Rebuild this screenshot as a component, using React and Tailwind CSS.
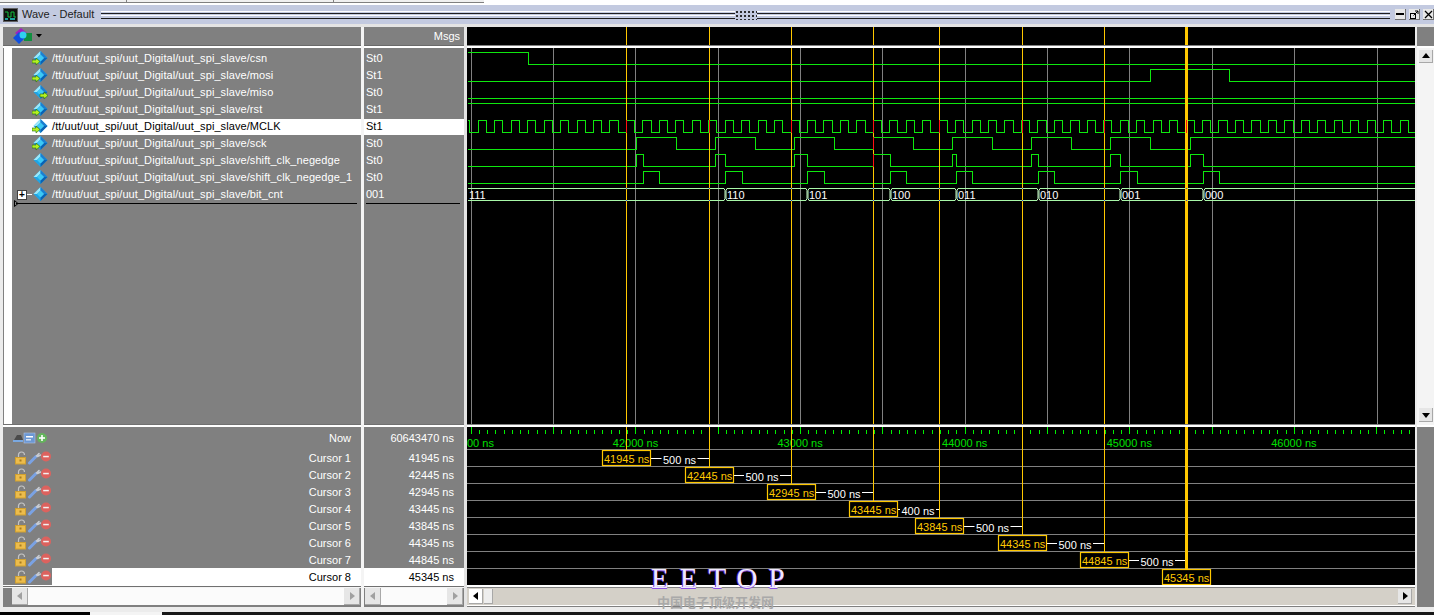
const FONT = "font-['Liberation_Sans',sans-serif]";

const SIGNALS = [
  { name: "csn", value: "St0", arrow: "left" },
  { name: "mosi", value: "St1", arrow: "left" },
  { name: "miso", value: "St0", arrow: "right" },
  { name: "rst", value: "St1", arrow: "left" },
  { name: "MCLK", value: "St1", arrow: "left", selected: true },
  { name: "sck", value: "St0", arrow: "left" },
  { name: "shift_clk_negedge", value: "St0" },
  { name: "shift_clk_negedge_1", value: "St0" },
  { name: "bit_cnt", value: "001", expand: true },
];

const CURSORS = [
  { x: 626, time: 41945, gap: "500 ns" },
  { x: 709, time: 42445, gap: "500 ns" },
  { x: 791, time: 42945, gap: "500 ns" },
  { x: 873, time: 43445, gap: "400 ns" },
  { x: 939, time: 43845, gap: "500 ns" },
  { x: 1022, time: 44345, gap: "500 ns" },
  { x: 1104, time: 44845, gap: "500 ns" },
  { x: 1186, time: 45345 },
];

const GREEN = "#0ee80e";
const YELLOW = "#ffc800";
const GRID = [471, 553, 635, 718, 800, 882, 965, 1047, 1129, 1212, 1294, 1377];
const BUS = [
  { x: 468, label: "111" },
  { x: 725, label: "110" },
  { x: 807, label: "101" },
  { x: 890, label: "100" },
  { x: 956, label: "011" },
  { x: 1038, label: "010" },
  { x: 1120, label: "001" },
  { x: 1203, label: "000" },
];

// level changes at each edge, starts at startHigh
function wave(hi, lo, edges, startHigh = false) {
  let high = startHigh;
  let d = `M468 ${(high ? hi : lo) + 0.5}`;
  edges.forEach((x) => {
    high = !high;
    d += ` H${Math.floor(x) + 0.5} V${(high ? hi : lo) + 0.5}`;
  });
  return d + " H1415";
}

function mclkEdges() {
  const edges = [];
  for (let k = -10; k < 48; k++) {
    const rise = 626.4 + k * 16.46;
    if (rise > 468) edges.push(rise);
    edges.push(rise + 8.2);
  }
  return edges.filter((x) => x > 468 && x < 1415);
}

const TRACES = [
  wave(52, 64, [528], true),
  wave(69, 81, [1150, 1229]),
  wave(98, 98, []),
  wave(103, 103, []),
  wave(120, 132, mclkEdges(), true),
  wave(137, 149, [636, 676, 715, 755, 794, 834, 873, 913, 952, 992, 1031, 1071, 1110, 1150, 1190]),
  wave(154, 166, [636, 643, 715, 725, 794, 807, 873, 890, 952, 956, 1031, 1038, 1110, 1120, 1190, 1203]),
  wave(171, 183, [643, 659, 725, 742, 807, 824, 890, 906, 956, 972, 1038, 1054, 1120, 1137, 1203, 1219]),
];

function SignalIcon({ arrow }) {
  return (
    <svg width="16" height="15" viewBox="0 0 16 15" className="shrink-0">
      <polygon points="8.5,0 15.5,7 8.5,14 1.5,7" fill="#1ea4e6" />
      <polygon points="8.5,0 1.5,7 5,7 8.5,3.5" fill="#9be8fb" />
      <polygon points="8.5,0 15.5,7 12,7 8.5,3.5" fill="#1b7fd0" />
      <polygon points="8.5,14 15.5,7 12,7 8.5,10.5" fill="#0a62b4" />
      <polygon points="8.5,3.5 12,7 8.5,10.5 5,7" fill="#3cc8f4" />
      {arrow === "left" && (
        <polygon points="0,9 4,9 4,7 8,10.5 4,14 4,12 0,12" fill="#b4f020" stroke="#1d6b12" strokeWidth="0.6" />
      )}
      {arrow === "right" && (
        <polygon points="8,9 12,9 12,7 16,10.5 12,14 12,12 8,12" fill="#b4f020" stroke="#1d6b12" strokeWidth="0.6" />
      )}
    </svg>
  );
}

function SignalRow({ signal }) {
  return (
    <div
      className={`flex h-[17px] items-center whitespace-nowrap ${
        signal.selected ? "bg-white text-black shadow-[inset_0_1px_0_#808080]" : "text-white"
      }`}
    >
      <div className="flex w-[20px] shrink-0 items-center justify-end">
        {signal.expand && (
          <>
            <div className="flex h-[10px] w-[10px] items-center justify-center border border-[#404040] bg-white text-[10px] leading-none font-bold text-black">
              +
            </div>
            <div className="h-px w-[5px] bg-white" />
          </>
        )}
      </div>
      <SignalIcon arrow={signal.arrow} />
      <span className="ml-[4px] tracking-[0.08px]">/tt/uut/uut_spi/uut_Digital/uut_spi_slave/{signal.name}</span>
    </div>
  );
}

function ScrollButton({ dir, dark, className = "" }) {
  const points = { left: "7,1 7,9 2,5", right: "3,1 3,9 8,5", up: "1,7 9,7 5,2", down: "1,3 9,3 5,8" };
  return (
    <div className={`flex shrink-0 items-center justify-center border-r border-b border-[#a8a8a8] bg-[#e6e6e6] ${className}`}>
      <svg width="10" height="10" viewBox="0 0 10 10">
        <polygon points={points[dir]} fill={dark ? "#000" : "#a0a0a0"} />
      </svg>
    </div>
  );
}

function HScroll({ pad = "" }) {
  return (
    <div className={`flex h-[17px] items-stretch bg-[#808080] ${pad}`}>
      <ScrollButton dir="left" className="w-[16px]" />
      <div className="flex-1 bg-[#fbfbfb]" />
      <ScrollButton dir="right" className="w-[16px]" />
    </div>
  );
}

function CursorIcons() {
  return (
    <svg width="38" height="14" viewBox="0 0 38 14" className="shrink-0">
      <path d="M3.5 6 V4 a3 3 0 0 1 6 0" fill="none" stroke="#c4c4c4" strokeWidth="1.2" />
      <rect x="0.5" y="6.5" width="10" height="6.5" fill="#ecbc4c" stroke="#d0a030" />
      <rect x="4.5" y="8.5" width="2" height="2" fill="#a87c20" />
      <path d="M14.5 12 L21 5.5" stroke="#7aa2e4" strokeWidth="3" strokeLinecap="round" />
      <path d="M21.5 5 L24 2.5 M22.5 5.5 L25.5 4" stroke="#c8ccd4" strokeWidth="1.6" strokeLinecap="round" />
      <circle cx="31" cy="5.5" r="5" fill="#dc625e" />
      <rect x="28.2" y="4.8" width="5.6" height="1.5" fill="#f4f0f0" />
    </svg>
  );
}

function NowIcons() {
  return (
    <svg width="35" height="13" viewBox="0 0 35 13" className="shrink-0">
      <path d="M1 8 L4 3 H8 L10 8 Z" fill="#4a4a4a" />
      <rect x="0" y="8" width="10" height="2" fill="#7aa8e0" />
      <rect x="11" y="1" width="11" height="10" fill="#6c98d4" stroke="#b0c4e4" strokeWidth="0.6" />
      <rect x="13" y="4" width="7" height="1.5" fill="#fff" />
      <rect x="13" y="7" width="5" height="1.5" fill="#d8e4f4" />
      <circle cx="29" cy="6" r="5" fill="#64b45c" />
      <rect x="26" y="5.2" width="6" height="1.6" fill="#fff" />
      <rect x="28.2" y="3" width="1.6" height="6" fill="#fff" />
    </svg>
  );
}

function CursorRow({ label, selected }) {
  return (
    <div className="flex h-[17px] items-center">
      <div className="flex w-[49px] shrink-0 pl-[12px]">
        <CursorIcons />
      </div>
      <div className={`flex h-full flex-1 items-center justify-end pt-px pr-[10px] ${selected ? "bg-white text-black" : "text-white"}`}>
        {label}
      </div>
    </div>
  );
}

function WaveHeader() {
  return (
    <svg width="948" height="18" viewBox="467 27 948 18" className="block bg-black" shapeRendering="crispEdges">
      {CURSORS.map((c, i) => (
        <rect key={c.x} x={i === 7 ? c.x - 1 : c.x} y="27" width={i === 7 ? 3 : 1} height="18" fill={YELLOW} />
      ))}
    </svg>
  );
}

function WaveCanvas() {
  return (
    <svg width="948" height="376" viewBox="467 48 948 376" className="block bg-black">
      <g shapeRendering="crispEdges">
        {GRID.map((x) => (
          <rect key={x} x={x} y="48" width="1" height="376" fill="#808080" />
        ))}
        {TRACES.map((d, i) => (
          <path key={i} d={d} fill="none" stroke={GREEN} strokeWidth="1" />
        ))}
        <path d="M468 188.5 H1415 M468 200.5 H1415" stroke="#a8f8a8" />
        {CURSORS.map((c, i) => (
          <rect key={c.x} x={i === 7 ? c.x - 1 : c.x} y="48" width={i === 7 ? 3 : 1} height="376" fill={YELLOW} />
        ))}
        {CURSORS.map((c) => (
          <g key={c.x}>
            <rect x={c.x} y="120" width="1" height="13" fill="#ff1010" />
            <rect x={c.x} y="188" width="1" height="1" fill="#3040d0" />
            <rect x={c.x} y="200" width="1" height="1" fill="#3040d0" />
          </g>
        ))}
        <rect x="873" y="137" width="1" height="13" fill="#ff1010" />
        <rect x="873" y="154" width="1" height="13" fill="#ff1010" />
      </g>
      {BUS.slice(1).map((b) => (
        <g key={b.x}>
          <rect x={b.x - 1} y="187" width="3" height="15" fill="#000" />
          <path
            d={`M${b.x - 1} 188.5 L${b.x} 190.5 V198.5 L${b.x - 1} 200.5 M${b.x + 2} 188.5 L${b.x + 1} 190.5 V198.5 L${b.x + 2} 200.5`}
            fill="none"
            stroke="#c8ffc8"
          />
        </g>
      ))}
      {BUS.map((b) => (
        <text key={b.label} x={b.x + (b.label === "111" ? 1 : 2)} y="199" fontSize="11" fill="#fff" fontFamily="Liberation Sans, sans-serif">
          {b.label}
        </text>
      ))}
    </svg>
  );
}

function CursorCanvas() {
  const ticks = [];
  for (let k = 0; k * 8.23 + 471.3 < 1415; k++) ticks.push(k);
  return (
    <svg width="948" height="158" viewBox="467 427 948 158" className="block bg-black" fontFamily="Liberation Sans, sans-serif" fontSize="11">
      <g shapeRendering="crispEdges">
        {ticks.map((k) => {
          const major = k % 10 === 0;
          return (
            <rect
              key={k}
              x={Math.floor(471.3 + k * 8.23)}
              y={major ? 427 : 430}
              width="1"
              height={major ? 7 : 4}
              fill="#00f000"
            />
          );
        })}
        {[449, 466, 483, 500, 517, 534, 551, 568].map((y) => (
          <rect key={y} x="467" y={y} width="948" height="1" fill="#808080" />
        ))}
      </g>
      <text x="467" y="447" fill="#00e000">
        00 ns
      </text>
      {[0, 1, 2, 3, 4].map((k) => (
        <text key={k} x={635.5 + k * 164.6} y="447" textAnchor="middle" fill="#00e000">
          {42000 + k * 1000} ns
        </text>
      ))}
      {CURSORS.map((c, i) => {
        const top = 450 + i * 17;
        const next = CURSORS[i + 1];
        return (
          <g key={c.x}>
            <rect x={i === 7 ? c.x - 1 : c.x} y="427" width={i === 7 ? 3 : 1} height={top - 427} fill={YELLOW} shapeRendering="crispEdges" />
            {next && (
              <>
                <rect x={c.x + 24} y={top + 8} width={next.x - c.x - 24} height="1" fill="#fff" shapeRendering="crispEdges" />
                <rect x={(c.x + 24 + next.x) / 2 - 18} y={top} width="36" height="15" fill="#000" />
                <text x={(c.x + 24 + next.x) / 2} y={top + 14} textAnchor="middle" fill="#fff">
                  {c.gap}
                </text>
              </>
            )}
            <rect x={c.x - 23.5} y={top + 0.5} width="48" height="15" fill="#000" stroke={YELLOW} strokeWidth="1.2" />
            <text x={c.x - 22} y={top + 13} fill={YELLOW}>
              {c.time} ns
            </text>
          </g>
        );
      })}
    </svg>
  );
}

function TitleIcon() {
  return (
    <svg width="15" height="14" viewBox="0 0 15 14" className="shrink-0">
      <rect x="0.5" y="0.5" width="14" height="13" fill="#101010" stroke="#606060" />
      <path d="M2 4 H5 V9 H8 V4 H11 V9 H13" fill="none" stroke="#10c040" />
      <rect x="2" y="10" width="3" height="2" fill="#20a0a0" />
      <rect x="7" y="10" width="5" height="2" fill="#20a0a0" />
    </svg>
  );
}

function TitleGrip() {
  return (
    <div className="relative flex h-[8px] flex-1 flex-col justify-between">
      <div className="h-[3px] border-t border-b border-t-white border-b-[#202020]" />
      <div className="h-[4px] border-t border-b border-t-white border-b-[#202020]" />
      <div className="absolute top-[-1px] left-[634px] h-[10px] w-[22px] bg-[#c3cae0] bg-[radial-gradient(#202020_0.7px,transparent_0.8px)] bg-[length:4px_4px]" />
    </div>
  );
}

function TitleButton({ children, className = "" }) {
  return (
    <div className={`flex h-[11px] w-[11px] items-center justify-center border-r border-b border-[#707070] bg-[#e8e8e8] ${className}`}>
      {children}
    </div>
  );
}

export default function App() {
  return (
    <div className={`relative flex h-[615px] w-[1434px] flex-col overflow-hidden bg-[#ececec] text-[11px] ${FONT}`}>
      {/* tab strip above the title */}
      <div className="h-[5px] shrink-0 bg-white">
        <div className="flex h-[3px] w-[484px] border-b border-[#808080] bg-[#f0f0f0]">
          <div className="w-[127px] border-r border-[#808080]" />
          <div className="ml-[3px] w-[204px] border-r border-[#808080]" />
        </div>
      </div>

      <div className="flex h-[19px] shrink-0 items-center bg-[#c3cae0] pl-[3px]">
        <TitleIcon />
        <span className="ml-[4px] w-[79px] whitespace-nowrap text-[#222]">Wave - Default</span>
        <TitleGrip />
        <TitleButton className="ml-[5px]">
          <div className="h-[2px] w-[8px] bg-black" />
        </TitleButton>
        <TitleButton className="ml-[3px]">
          <svg width="9" height="9" viewBox="0 0 9 9">
            <rect x="0.5" y="3.5" width="5" height="5" fill="none" stroke="#000" />
            <path d="M3.5 5.5 L8 1 M5 1 H8 V4" fill="none" stroke="#000" />
          </svg>
        </TitleButton>
        <TitleButton className="ml-[3px]">
          <svg width="9" height="9" viewBox="0 0 9 9">
            <path d="M1 1 L8 8 M8 1 L1 8" stroke="#000" strokeWidth="1.3" />
          </svg>
        </TitleButton>
      </div>
      <div className="h-[3px] shrink-0 bg-[#e4e4e4]" />

      {/* signals + wave pane */}
      <div className="flex h-[400px] shrink-0 pl-[3px]">
        <div className="flex w-[358px] flex-col">
          <div className="flex h-[19px] items-center border-b border-[#6a6a6a] bg-[#808080] pl-[10px]">
            <svg width="24" height="17" viewBox="0 0 24 17">
              <polygon points="8,0 14,5 8,10 2,5" fill="#a020c0" />
              <rect x="11" y="5" width="8" height="8" fill="#109040" />
              <polygon points="6,4 12,10 6,16 0,10" fill="#1050e0" />
              <circle cx="10" cy="7" r="3.5" fill="#30d0f0" />
            </svg>
            <svg width="6" height="4" viewBox="0 0 6 4" className="ml-[-1px]">
              <polygon points="0,0 6,0 3,3.5" fill="#000" />
            </svg>
          </div>
          <div className="h-[2px] bg-white" />
          <div className="flex flex-1 border-l border-[#808080] bg-white pl-[8px]">
            <div className="relative flex-1 bg-[#808080] pt-[2px]">
              {SIGNALS.map((s) => (
                <SignalRow key={s.name} signal={s} />
              ))}
              <div className="mr-[4px] ml-[4px] h-px bg-black" />
              <svg width="5" height="7" viewBox="0 0 5 7" className="absolute top-[152px] left-[2px]">
                <path d="M0.5 0.5 L4 3.5 L0.5 6.5 Z" fill="none" stroke="#000" />
              </svg>
            </div>
          </div>
          <div className="h-[1px] bg-[#707070]" />
          <div className="h-[2px] bg-white" />
        </div>
        <div className="w-[3px] bg-[#f4f4f4]" />
        <div className="flex w-[100px] flex-col">
          <div className="flex h-[19px] items-center justify-end border-b border-[#6a6a6a] bg-[#808080] pr-[4px] text-white">Msgs</div>
          <div className="h-[2px] bg-white" />
          <div className="flex-1 bg-[#808080] pt-[2px]">
            {SIGNALS.map((s) => (
              <div
                key={s.name}
                className={`flex h-[17px] items-center pl-[2px] ${s.selected ? "bg-white text-black shadow-[inset_0_1px_0_#808080]" : "text-white"}`}
              >
                {s.value}
              </div>
            ))}
            <div className="mr-[4px] ml-[2px] h-px bg-black" />
          </div>
          <div className="h-[1px] bg-[#707070]" />
          <div className="h-[2px] bg-white" />
        </div>
        <div className="w-[3px] bg-[#e4e4e4]" />
        <div className="flex w-[948px] flex-col">
          <WaveHeader />
          <div className="h-px bg-[#808080]" />
          <div className="h-[2px] bg-white" />
          <WaveCanvas />
          <div className="h-[1px] bg-[#808080]" />
          <div className="h-[2px] bg-white" />
        </div>
        <div className="flex w-[19px] flex-col pl-[2px]">
          <div className="h-[19px] bg-[#808080]" />
          <div className="h-[2px] bg-white" />
          <div className="flex flex-1 flex-col bg-[#f4f4f4] pt-[2px] pr-px pb-[3px] pl-[2px]">
            <ScrollButton dir="up" dark className="h-[13px]" />
            <div className="flex-1" />
            <ScrollButton dir="down" dark className="h-[14px]" />
          </div>
          <div className="h-[2px] bg-white" />
        </div>
      </div>

      {/* cursor pane */}
      <div className="flex h-[158px] shrink-0 pl-[3px]">
        <div className="w-[358px] bg-[#808080]">
          <div className="flex h-[22px] items-center pr-[10px] pl-[10px] text-white">
            <NowIcons />
            <span className="ml-auto">Now</span>
          </div>
          {CURSORS.map((c, i) => (
            <CursorRow key={c.x} label={`Cursor ${i + 1}`} selected={i === 7} />
          ))}
        </div>
        <div className="w-[3px] bg-[#f4f4f4]" />
        <div className="w-[100px] bg-[#808080] text-right">
          <div className="flex h-[22px] items-center justify-end pr-[10px] text-white">60643470 ns</div>
          {CURSORS.map((c, i) => (
            <div key={c.x} className={`flex h-[17px] items-center justify-end pt-px pr-[10px] ${i === 7 ? "bg-white text-black" : "text-white"}`}>
              {c.time} ns
            </div>
          ))}
        </div>
        <div className="w-[3px] bg-[#e4e4e4]" />
        <CursorCanvas />
        <div className="flex w-[19px] pl-[2px]">
          <div className="flex-1 bg-[#808080]" />
        </div>
      </div>

      {/* scrollbars */}
      <div className="flex h-[22px] shrink-0 pl-[3px]">
        <div className="w-[358px]">
          <div className="h-[1px] bg-white" />
          <div className="h-[1px] bg-[#707070]" />
          <div className="h-px bg-[#f4f4f4]" />
          <HScroll pad="pl-[9px] pr-px" />
          <div className="h-[2px] bg-[#808080]" />
        </div>
        <div className="w-[3px] bg-[#f4f4f4]" />
        <div className="w-[100px]">
          <div className="h-[1px] bg-white" />
          <div className="h-[1px] bg-[#707070]" />
          <div className="h-px bg-[#f4f4f4]" />
          <HScroll pad="pl-px pr-px" />
          <div className="h-[2px] bg-[#808080]" />
        </div>
        <div className="w-[3px] bg-[#e4e4e4]" />
        <div className="w-[948px]">
          <div className="h-[2px] bg-white" />
          <div className="h-[1px] bg-[#808080]" />
          <div className="flex h-[17px] items-center bg-[#d4d0c8] pr-[3px] pl-[2px]">
            <ScrollButton dir="left" dark className="h-[15px] w-[14px] bg-white" />
            <div className="ml-px h-[15px] w-[9px] border-r border-b border-[#a8a8a8] bg-[#eeeeee]" />
            <div className="flex-1" />
            <ScrollButton dir="right" dark className="h-[15px] w-[14px]" />
          </div>
          <div className="h-px bg-white" />
          <div className="h-px bg-[#808080]" />
        </div>
        <div className="flex w-[19px] pl-[2px]">
          <div className="flex-1 bg-[#808080]" />
        </div>
      </div>

      <div className="h-[5px] shrink-0" />
      <div className="flex h-[3px] shrink-0">
        <div className="w-[90px] bg-black" />
        <div className="w-[72px] bg-[#f4f4f4]" />
        <div className="flex-1 bg-[#181818]" />
      </div>

      {/* watermark printed over the shot */}
      <div className="absolute top-[562px] left-[651px] font-['Liberation_Serif',serif] text-[29px] leading-[32px] tracking-[11px] whitespace-nowrap text-[#efe8ff] [text-shadow:-1px_0_0_#6a2ec8,0_1px_0_#8a50e0]">
        EETOP
      </div>
      <div className="absolute top-[594px] left-[657px] font-['Noto_Sans_CJK_SC',sans-serif] text-[13px] leading-[16px] font-bold whitespace-nowrap text-[#a9a9a9]">
        中国电子顶级开发网
      </div>
    </div>
  );
}
